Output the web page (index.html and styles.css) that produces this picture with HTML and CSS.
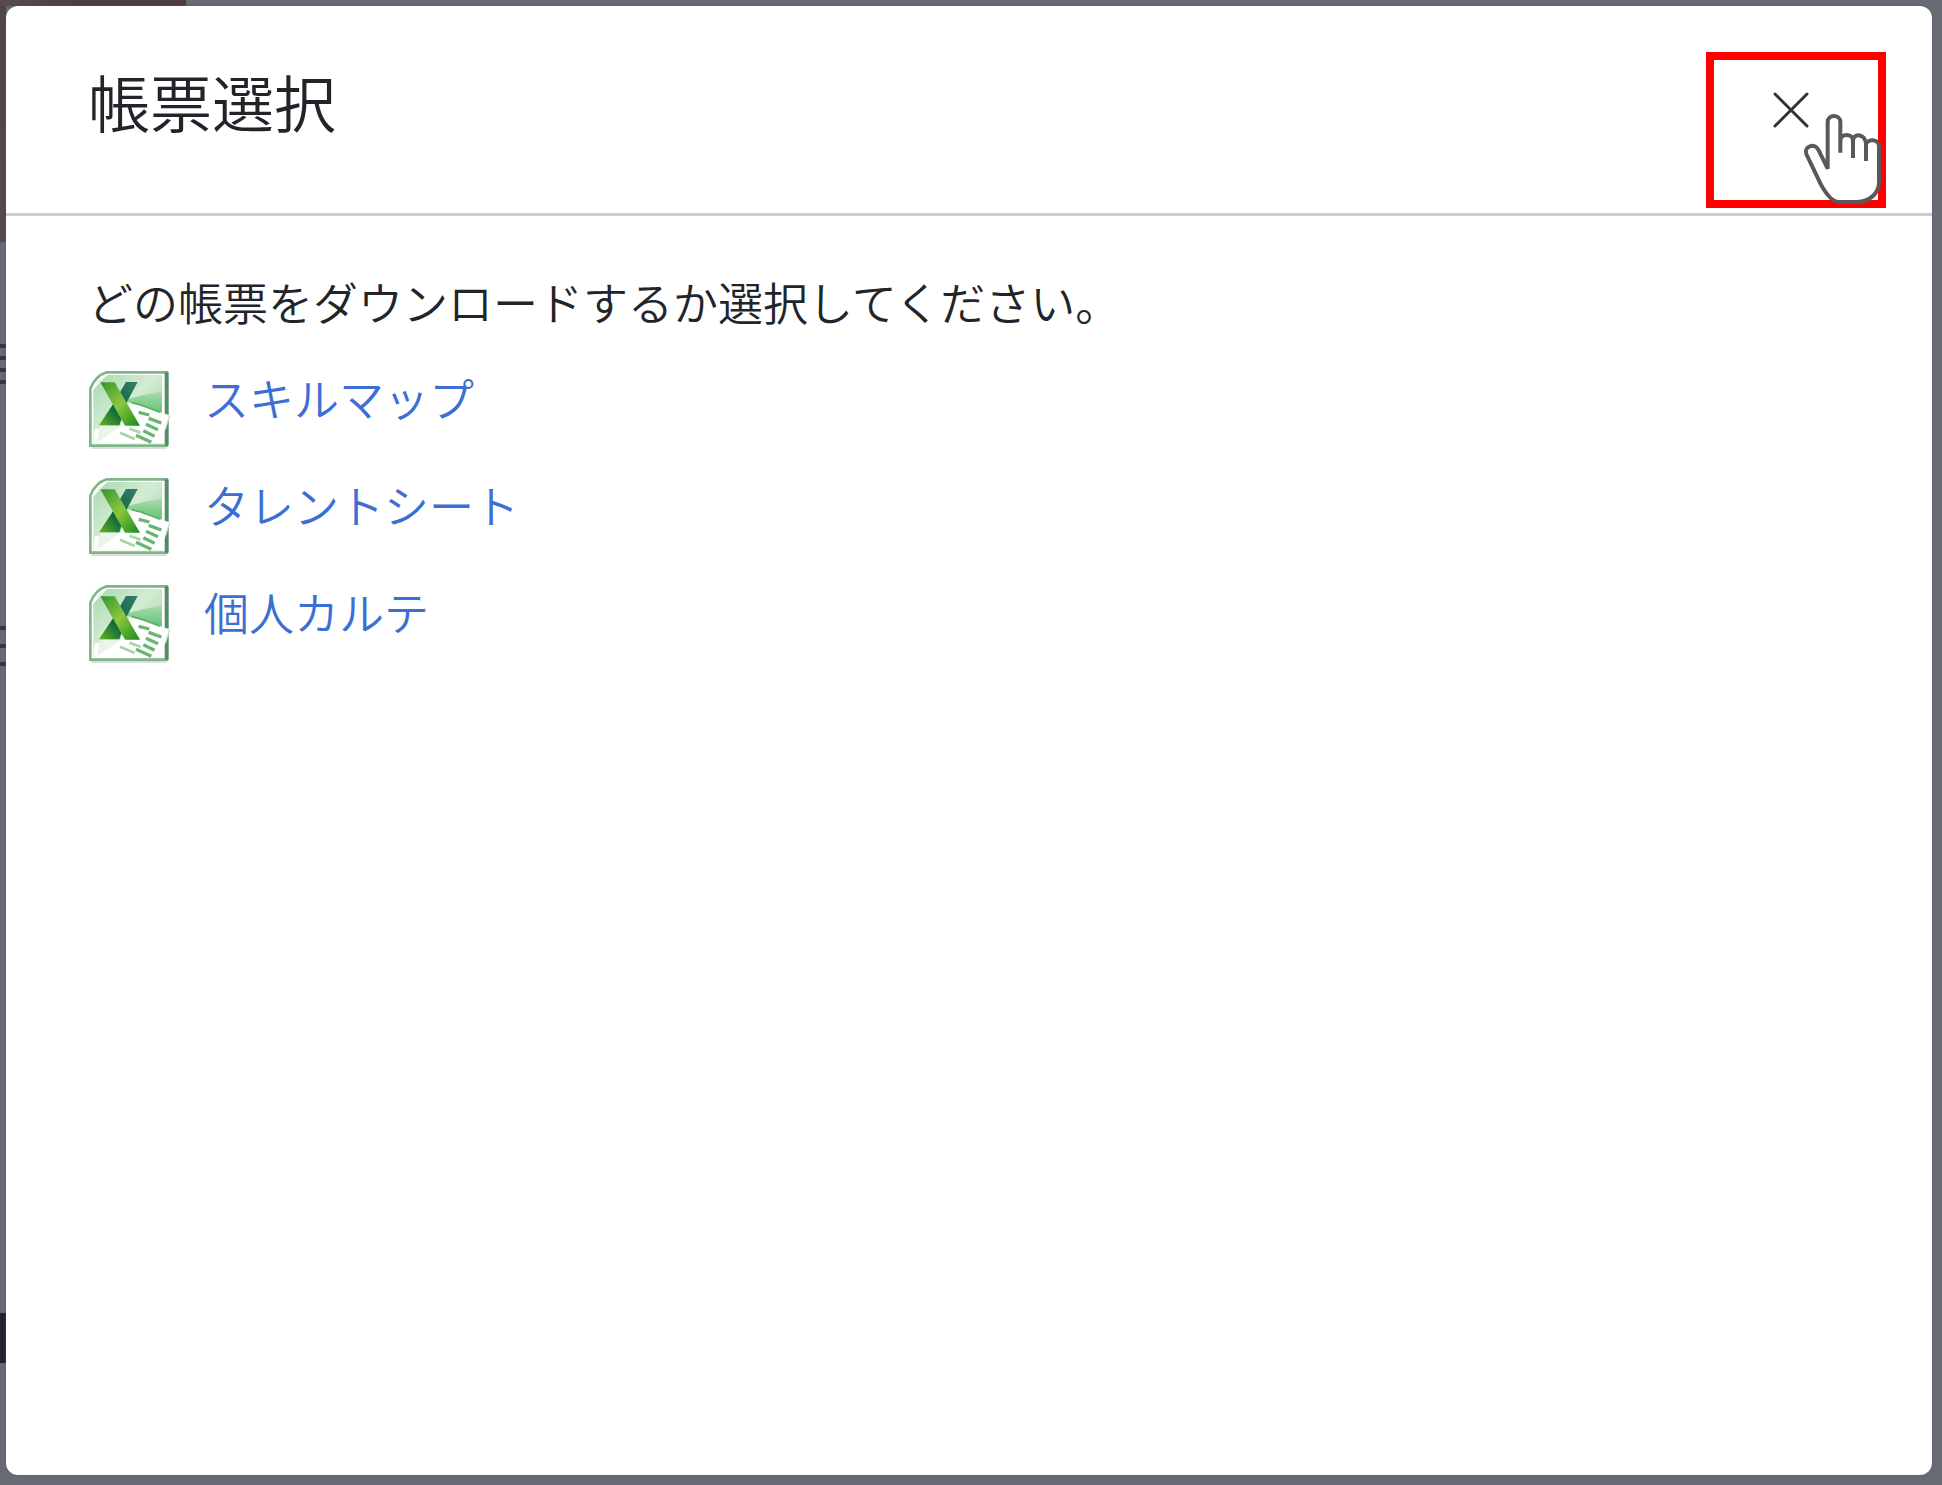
FILE: index.html
```html
<!DOCTYPE html>
<html lang="ja">

<head>
    <meta charset="UTF-8">
    <meta name="viewport" content="width=device-width, initial-scale=1.0">
    <title>帳票選択</title>
    <link rel="stylesheet" href="styles.css">
</head>

<body>
    <!-- Shared spreadsheet icon -->
    <svg class="sprite" aria-hidden="true">
        <defs>
            <linearGradient id="sheet-bg" x1="0" y1="0" x2="1" y2="1">
                <stop offset="0" stop-color="#a9d8ae" />
                <stop offset="0.45" stop-color="#d3ecd4" />
                <stop offset="1" stop-color="#8fcf98" />
            </linearGradient>
            <linearGradient id="sheet-glow" x1="0" y1="0" x2="0" y2="1">
                <stop offset="0" stop-color="#a8dcaa" />
                <stop offset="1" stop-color="#5fc070" />
            </linearGradient>
            <linearGradient id="x-light" x1="0" y1="0" x2="1" y2="1">
                <stop offset="0" stop-color="#2f9430" />
                <stop offset="0.5" stop-color="#8cc83c" />
                <stop offset="1" stop-color="#168a1c" />
            </linearGradient>
            <linearGradient id="x-dark" x1="1" y1="0" x2="0" y2="1">
                <stop offset="0" stop-color="#377c6c" />
                <stop offset="0.6" stop-color="#0b6640" />
                <stop offset="1" stop-color="#65b51c" />
            </linearGradient>
            <symbol id="excel" viewBox="54 60 252 240">
                <path d="M64 294H290" stroke="#e0dae3" stroke-width="6" />
                <path d="M110 67H290V287H61V116Q76 78 110 67Z" fill="#fff" stroke="#80b588" stroke-width="8" />
                <path d="M112 75H276V280H70V120Q84 86 112 75Z" fill="url(#sheet-bg)" />
                <path d="M160 150Q215 136 276 124V194L180 158Z" fill="url(#sheet-glow)" />
                <path d="M70 280L74 238L150 230L180 158L276 194V280Z" fill="#fff" />
                <path d="M290 67V287" stroke="#528b65" stroke-width="12" />
                <path d="M66 120L110 73" stroke="#fff" stroke-width="4" />
                <path d="M80 278L90 228H152Z" fill="#e8f5e8" />
                <path d="M168 96H203L172 154L148 226H87L128 164Z" fill="url(#x-dark)" />
                <path d="M182 158L299 196L272 280L196 270L156 231H212Z" fill="#fff" />
                <path d="M91 97H134L210 227H165Z" fill="url(#x-light)" />
                <path d="M299 197L286 238" stroke="#c7dfc9" stroke-width="4" />
                <path d="M184 158L214 165L270 187" fill="none" stroke="#5cae68" stroke-width="5" />
                <path d="M206 187L238 195M236 205L274 219M228 223L264 239M220 242L254 259M198 256L244 277" stroke="#6ab671" stroke-width="10" />
                <path d="M178 236L212 248M150 248L194 267" stroke="#a8d4aa" stroke-width="8" />
            </symbol>
        </defs>
    </svg>

    <main class="dialog" role="dialog" aria-labelledby="dialog-title">
        <header class="dialog-header">
            <h1 id="dialog-title">帳票選択</h1>
            <button class="close-button" type="button" aria-label="閉じる">
                <svg class="close-icon" viewBox="0 0 36 36" aria-hidden="true">
                    <path d="M2 2L34 34M34 2L2 34" />
                </svg>
                <svg class="pointer" viewBox="60 30 264 294" aria-hidden="true">
                    <path d="M146 206V66C146 42 184 42 184 66V122C184 99 222 99 222 122C222 99 261 99 261 134C265 116 300 115 300 140V246C300 282 270 305 234 306H180C158 306 140 280 124 250L82 162C74 140 106 127 118 149L146 206Z" />
                    <path d="M184 120V158M222 120V174M261 132V183" />
                </svg>
            </button>
        </header>

        <section class="dialog-body">
            <p class="message">どの帳票をダウンロードするか選択してください。</p>
            <ul class="report-list">
                <li>
                    <svg class="report-icon" aria-hidden="true"><use href="#excel" /></svg>
                    <a href="#skill-map">スキルマップ</a>
                </li>
                <li>
                    <svg class="report-icon" aria-hidden="true"><use href="#excel" /></svg>
                    <a href="#talent-sheet">タレントシート</a>
                </li>
                <li>
                    <svg class="report-icon" aria-hidden="true"><use href="#excel" /></svg>
                    <a href="#personal-record">個人カルテ</a>
                </li>
            </ul>
        </section>
    </main>
</body>

</html>
```
FILE: styles.css
```css
:root {
    --backdrop: #676a73;
    --text-color: #212529;
    --link-color: #3c6fd4;
    --line-color: #cccccc;
}

* {
    box-sizing: border-box;
}

body {
    min-height: 100vh;
    margin: 0;
    padding: 6px 10px 10px 6px;
    display: flex;
    background-color: var(--backdrop);
    /* Dimmed page showing around the dialog */
    background-image:
        linear-gradient(90deg, #594a50, #493b45 50%, #503a40),
        linear-gradient(#51434a, #59474c),
        linear-gradient(#20222f, #20222f),
        repeating-linear-gradient(#343743 0 4px, #676a73 4px 12px),
        repeating-linear-gradient(#343743 0 4px, #676a73 4px 18px);
    background-repeat: no-repeat;
    background-size: 186px 6px, 6px 242px, 6px 50px, 6px 40px, 6px 40px;
    background-position: 0 0, 0 0, 0 1313px, 0 344px, 0 626px;
    color: var(--text-color);
    font-family: "Noto Sans CJK JP", sans-serif;
    font-weight: 350;
}

.sprite {
    position: absolute;
    width: 0;
    height: 0;
}

.dialog {
    flex: 1;
    background-color: #ffffff;
    border-radius: 12px;
    box-shadow: 0 0 2px #50535c;
}

.dialog-header {
    display: flex;
    justify-content: space-between;
    align-items: flex-start;
    padding: 46px 46px 5px 82px;
    border-bottom: 3px solid var(--line-color);
}

h1 {
    margin: 4px 0 0;
    font-size: 62px;
    font-weight: 350;
    line-height: 90px;
}

.close-button {
    position: relative;
    display: flex;
    align-items: flex-start;
    width: 180px;
    height: 156px;
    padding: 32px 0 0 59px;
    background: none;
    border: 8px solid #ff0000;
    cursor: pointer;
}

.close-icon {
    width: 36px;
    height: 36px;
    fill: none;
    stroke: #303238;
    stroke-width: 3;
    stroke-linecap: round;
}

.pointer {
    position: absolute;
    left: 85px;
    top: 50px;
    width: 88px;
    height: 98px;
    fill: #ffffff;
    stroke: #595959;
    stroke-width: 12;
}

.dialog-body {
    padding: 58px 82px;
}

.message {
    margin: 0 0 40px;
    font-size: 45px;
    line-height: 56px;
}

.report-list {
    display: flex;
    flex-direction: column;
    gap: 27px;
    margin: 0;
    padding: 0;
    list-style: none;
}

.report-list li {
    display: flex;
    align-items: flex-start;
    gap: 32px;
}

.report-icon {
    width: 84px;
    height: 80px;
}

.report-list a {
    color: var(--link-color);
    font-size: 45px;
    line-height: 56px;
    text-decoration: none;
}

.report-list a:hover {
    text-decoration: underline;
}
```
